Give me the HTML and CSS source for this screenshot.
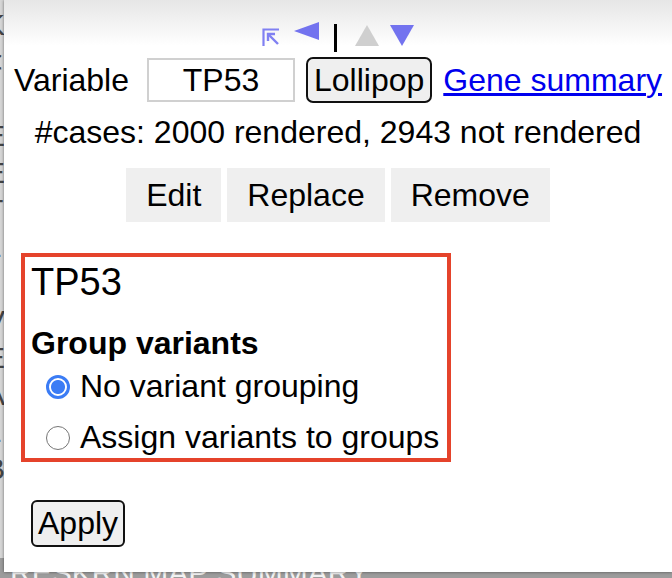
FILE: index.html
```html
<!DOCTYPE html>
<html>
<head>
<meta charset="utf-8">
<link rel="stylesheet" href="styles.css">
</head>
<body>
<div class="backdrop">
  <div class="bg-col">K<br>&lt;<br>/<br>E<br>E<br>T<br>1<br>/<br>V<br>E<br>A<br>1<br>B<br>/<br>I</div>
  <div class="bg-foot">RESKRN MAP SUMMARY</div>
</div>
<div class="panel">
  <div class="nav">
    <svg class="ic-home" width="18" height="18" viewBox="0 0 18 18"><path d="M1.5 18V1.5H17" fill="none" stroke="#8080f2" stroke-width="2.2"/><path d="M16 16L6.5 6.5" fill="none" stroke="#8080f2" stroke-width="2.4"/><path d="M6 13V6H13" fill="none" stroke="#8080f2" stroke-width="2.4"/></svg>
    <svg class="ic-left" width="25" height="18" viewBox="0 0 25 18"><polygon points="0,9 25,0 25,18" fill="#7373ef"/></svg>
    <span class="bar"></span>
    <svg class="ic-up" width="24" height="21" viewBox="0 0 24 21"><polygon points="12,0 24,21 0,21" fill="#cfcfcf"/></svg>
    <svg class="ic-down" width="24" height="21" viewBox="0 0 24 21"><polygon points="0,0 24,0 12,21" fill="#7373ef"/></svg>
  </div>
  <div class="var-row">
    <span class="var-label">Variable</span>
    <input class="var-input" type="text" value="TP53">
    <button class="btn-outline">Lollipop</button>
    <a class="gene-link" href="#">Gene summary</a>
  </div>
  <div class="cases">#cases: 2000 rendered, 2943 not rendered</div>
  <div class="actions">
    <button class="act">Edit</button>
    <button class="act">Replace</button>
    <button class="act">Remove</button>
  </div>
  <div class="box">
    <h2 class="box-title">TP53</h2>
    <h3 class="box-sub">Group variants</h3>
    <label class="opt"><input type="radio" name="g" class="radio" checked><span>No variant grouping</span></label>
    <label class="opt"><input type="radio" name="g" class="radio"><span>Assign variants to groups</span></label>
  </div>
  <button class="apply">Apply</button>
</div>
</body>
</html>
```
FILE: styles.css
```css
* { box-sizing: border-box; }
html, body { margin: 0; padding: 0; }
body {
  width: 672px;
  height: 578px;
  overflow: hidden;
  position: relative;
  background: #d6d6d6;
  font-family: "Liberation Sans", Arial, Helvetica, sans-serif;
}
.backdrop {
  display: flex;
  flex-direction: column;
  height: 100%;
  color: #444;
  font-size: 30px;
  line-height: 37px;
}
.bg-col {
  flex: 1;
  overflow: hidden;
  margin-left: -15px;
  padding-top: 6px;
}
.bg-foot {
  height: 20px;
  padding-left: 10px;
  color: #f2f2f2;
  line-height: 30px;
  background: #9c9c9c;
  overflow: hidden;
}
.panel {
  position: absolute;
  left: 4px;
  top: 0;
  width: 668px;
  height: 572px;
  background: linear-gradient(#e6e6e6 0, #fff 46px);
  box-shadow: 0 0 3px rgba(0,0,0,0.5);
  display: flex;
  flex-direction: column;
  align-items: center;
  font-size: 32px;
  color: #000;
}
.nav {
  display: flex;
  align-items: flex-start;
  height: 30px;
  margin-top: 22px;
}
.ic-home { margin-top: 6px; }
.ic-left { margin-left: 14px; }
.bar {
  width: 3px;
  height: 28px;
  margin-top: 2px;
  margin-left: 15px;
  background: #000;
}
.ic-up { margin-left: 18px; margin-top: 3px; }
.ic-down { margin-left: 11px; margin-top: 3px; }

.var-row {
  display: flex;
  align-items: center;
  height: 46px;
  margin-top: 5px;
}
.var-label { margin-right: 18px; line-height: 37px; }
.var-input {
  width: 148px;
  height: 44px;
  margin: 0 11px 0 0;
  padding: 0;
  border: 2px solid #d0d0d0;
  font: inherit;
  text-align: center;
  color: #000;
  background: #fff;
}
.btn-outline {
  font: inherit;
  line-height: 38px;
  padding: 2px 6px;
  border: 2px solid #111;
  border-radius: 7px;
  background: #efefef;
  color: #000;
  margin-right: 11px;
}
.gene-link { color: #0000ee; text-decoration: underline; line-height: 37px; }

.cases { margin-top: 11px; line-height: 37px; }

.actions {
  display: flex;
  gap: 6px;
  margin-top: 17px;
}
.act {
  font: inherit;
  line-height: 38px;
  padding: 8px 20px;
  border: 0;
  border-radius: 0;
  background: #efefef;
  color: #000;
}

.box {
  align-self: flex-start;
  margin: 31px 0 0 17px;
  border: 4px solid #e5432b;
  padding: 3px 8px 2px 6px;
}
.box-title {
  margin: 0;
  font-size: 38px;
  font-weight: normal;
  line-height: 44px;
}
.box-sub {
  margin: 21px 0 0;
  font-size: 32px;
  font-weight: bold;
  line-height: 37px;
}
.opt {
  display: flex;
  align-items: center;
  line-height: 37px;
  margin-top: 6px;
}
.opt + .opt { margin-top: 14px; }
.radio {
  appearance: none;
  -webkit-appearance: none;
  width: 24px;
  height: 24px;
  margin: 0 10px 0 15px;
  border: 1.5px solid #767676;
  border-radius: 50%;
  background: #fff;
  flex: none;
}
.radio:checked {
  border: 3px solid #3b7cf5;
  background: radial-gradient(circle, #3b7cf5 0, #3b7cf5 6.5px, #fff 7.5px);
}

.apply {
  align-self: flex-start;
  margin: 38px 0 0 27px;
  font: inherit;
  line-height: 37px;
  padding: 3px 5px;
  border: 2px solid #111;
  border-radius: 6px;
  background: #efefef;
  color: #000;
}
```
